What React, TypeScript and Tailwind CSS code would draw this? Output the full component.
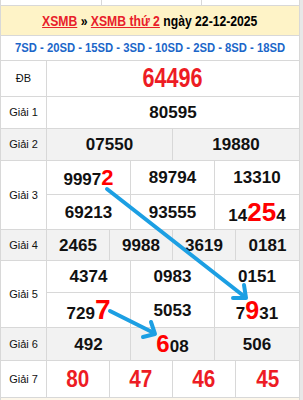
import React from "react";

const line = "border-[#d8d8d8]";

function Label({ children }: { children: React.ReactNode }) {
  return (
    <div className="w-[46px] shrink-0 border-r border-[#d8d8d8] flex items-center justify-center text-[11px] text-[#111]">
      {children}
    </div>
  );
}

function Num({ children, last }: { children: React.ReactNode; last?: boolean }) {
  return (
    <div
      className={
        "flex items-center justify-center font-bold text-[17px] leading-none text-[#111] " +
        (last ? "" : "border-r border-[#d8d8d8]")
      }
    >
      <span className="flex items-baseline">{children}</span>
    </div>
  );
}

function R({ children, size }: { children: React.ReactNode; size: string }) {
  return <span className={"text-[#ff0000] leading-none " + size}>{children}</span>;
}

export default function App() {
  return (
    <div className="relative w-[303px] h-[400px] overflow-hidden bg-[#e8e8e8] font-['Liberation_Sans',Arial,sans-serif] text-black">
      <div className={"w-[300px] bg-white border-x " + line}>
        {/* fragment of previous table */}
        <div className="h-[6px] grid grid-cols-[101px_100px_1fr] border-b border-[#d8d8d8]">
          <div className="border-r border-[#d8d8d8]" />
          <div className="border-r border-[#d8d8d8]" />
          <div />
        </div>

        {/* header */}
        <div className="h-[30px] bg-[#fef3c7] border-b border-[#d8d8d8] flex items-center justify-center">
          <span className="inline-block scale-x-[0.87] text-[14px] font-bold whitespace-nowrap leading-none">
            <span className="text-[#e8202a] underline">XSMB</span> »{" "}
            <span className="text-[#e8202a] underline">XSMB thứ 2</span> ngày 22-12-2025
          </span>
        </div>

        {/* blue row */}
        <div className="h-[25px] border-b border-[#d8d8d8] flex items-center justify-center">
          <span className="inline-block scale-x-[0.9] text-[12.5px] font-bold text-[#1b66c9] whitespace-nowrap leading-none">
            7SD - 20SD - 15SD - 3SD - 10SD - 2SD - 8SD - 18SD
          </span>
        </div>

        {/* DB */}
        <div className="h-[36px] flex border-b border-[#d8d8d8]">
          <Label>ĐB</Label>
          <div className="flex-1 flex items-center justify-center">
            <span className="inline-block scale-x-[0.8] text-[27px] font-bold leading-none text-[#ed1c24]">
              64496
            </span>
          </div>
        </div>

        {/* Giai 1 */}
        <div className="h-[32px] flex border-b border-[#d8d8d8]">
          <Label>Giải 1</Label>
          <div className="flex-1 grid grid-cols-1">
            <Num last>80595</Num>
          </div>
        </div>

        {/* Giai 2 */}
        <div className="h-[32px] flex border-b border-[#d8d8d8] bg-[#f2f2f2]">
          <Label>Giải 2</Label>
          <div className="flex-1 grid grid-cols-2">
            <Num>07550</Num>
            <Num last>19880</Num>
          </div>
        </div>

        {/* Giai 3 */}
        <div className="h-[69px] flex border-b border-[#d8d8d8]">
          <Label>Giải 3</Label>
          <div className="flex-1 flex flex-col">
            <div className="h-[34px] grid grid-cols-3 border-b border-[#d8d8d8]">
              <Num>
                9997<R size="text-[22px]">2</R>
              </Num>
              <Num>89794</Num>
              <Num last>13310</Num>
            </div>
            <div className="flex-1 grid grid-cols-3">
              <Num>69213</Num>
              <Num>93555</Num>
              <Num last>
                14<R size="text-[26px]">25</R>4
              </Num>
            </div>
          </div>
        </div>

        {/* Giai 4 */}
        <div className="h-[31px] flex border-b border-[#d8d8d8] bg-[#f2f2f2]">
          <Label>Giải 4</Label>
          <div className="flex-1 grid grid-cols-4">
            <Num>2465</Num>
            <Num>9988</Num>
            <Num>3619</Num>
            <Num last>0181</Num>
          </div>
        </div>

        {/* Giai 5 */}
        <div className="h-[67px] flex border-b border-[#d8d8d8]">
          <Label>Giải 5</Label>
          <div className="flex-1 flex flex-col">
            <div className="h-[32px] grid grid-cols-3 border-b border-[#d8d8d8]">
              <Num>4374</Num>
              <Num>0983</Num>
              <Num last>0151</Num>
            </div>
            <div className="flex-1 grid grid-cols-3">
              <Num>
                729<R size="text-[28px]">7</R>
              </Num>
              <Num>5053</Num>
              <Num last>
                7<R size="text-[25px]">9</R>31
              </Num>
            </div>
          </div>
        </div>

        {/* Giai 6 */}
        <div className="h-[33px] flex border-b border-[#d8d8d8] bg-[#f2f2f2]">
          <Label>Giải 6</Label>
          <div className="flex-1 grid grid-cols-3">
            <Num>492</Num>
            <Num>
              <R size="text-[24px]">6</R>08
            </Num>
            <Num last>506</Num>
          </div>
        </div>

        {/* Giai 7 */}
        <div className="h-[37px] flex border-b border-[#d8d8d8]">
          <Label>Giải 7</Label>
          <div className="flex-1 grid grid-cols-4">
            {["80", "47", "46", "45"].map((v, i) => (
              <div
                key={v}
                className={
                  "flex items-center justify-center " + (i < 3 ? "border-r border-[#d8d8d8]" : "")
                }
              >
                <span className="inline-block scale-x-[0.9] text-[23px] font-bold leading-none text-[#ed1c24]">
                  {v}
                </span>
              </div>
            ))}
          </div>
        </div>
        <div className="h-[10px] bg-[#fdf7ea]" />
      </div>

      {/* arrows overlay */}
      <svg
        className="absolute left-0 top-0 pointer-events-none"
        width="303"
        height="400"
        viewBox="0 0 303 400"
      >
        <g stroke="#1c9fe3" strokeWidth="4" strokeLinecap="round" strokeLinejoin="round" fill="none">
          <line x1="107" y1="189" x2="245" y2="297" />
          <polyline points="233,298 246,298 244,285" />
          <line x1="110" y1="311" x2="154" y2="333" />
          <polyline points="143,337 155,334 151,322" />
        </g>
      </svg>
    </div>
  );
}
